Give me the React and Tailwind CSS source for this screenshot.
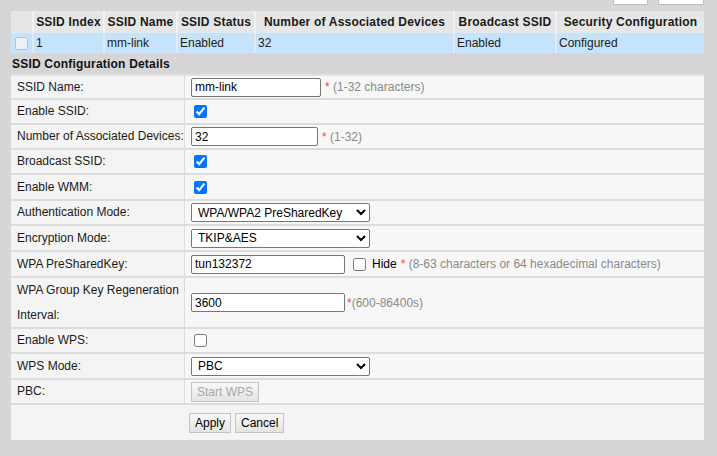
import React from "react";

const font = "font-['Liberation_Sans',Arial,sans-serif]";

const headers = [
    "",
    "SSID Index",
    "SSID Name",
    "SSID Status",
    "Number of Associated Devices",
    "Broadcast SSID",
    "Security Configuration",
];
const rowData = ["", "1", "mm-link", "Enabled", "32", "Enabled", "Configured"];

const Hint = ({ children }) => (
    <span className="ml-[4px] text-[#8a8a8a] whitespace-nowrap">
        <span className="text-[#ff4444]">*</span> {children}
    </span>
);

const Row = ({ label, h, children }) => (
    <div className={`flex ${h} border-b-2 border-[#dcdcdc]`}>
        <div className="w-[174px] shrink-0 flex items-center pl-[6px] border-r border-[#dcdcdc] bg-[#f4f4f4] leading-[25px]">
            {label}
        </div>
        <div className="flex-1 flex items-center pl-[6px] bg-[#f7f7f7]">{children}</div>
    </div>
);

const Check = ({ on }) => (
    <input type="checkbox" defaultChecked={on} className="m-0 ml-[3px] w-[13px] h-[13px]" />
);

const TextBox = ({ value, w }) => (
    <input
        type="text"
        defaultValue={value}
        className={`${w} h-[19px] border border-[#767676] rounded-[2px] bg-white px-[3px] text-[12px] text-black`}
    />
);

const Select = ({ value }) => (
    <select
        defaultValue={value}
        className="w-[179px] h-[19px] border border-[#767676] rounded-[2px] bg-white pl-[2px] text-[12px] text-black"
    >
        <option>{value}</option>
    </select>
);

const Btn = ({ children, disabled }) => (
    <button
        disabled={disabled}
        className={`h-[20px] px-[5px] border border-[#c4c4c4] bg-gradient-to-b from-[#f8f8f8] to-[#e4e4e4] text-[12px] ${
            disabled ? "text-[#a8a8a8]" : "text-black"
        }`}
    >
        {children}
    </button>
);

export default function App() {
    return (
        <div className={`${font} text-[12px] text-[#1a1a1a] bg-[#d6d6d6] w-[717px] h-[456px] overflow-hidden`}>
            {/* buttons cut off at the top */}
            <div className="flex h-[5px] mb-[6px]">
                <div className="ml-[613px] w-[35px] bg-white border border-t-0 border-[#bdbdbd]" />
                <div className="ml-[10px] w-[46px] bg-white border border-t-0 border-[#bdbdbd]" />
            </div>

            <div className="ml-[11px] w-[693px]">
                <div className="grid grid-cols-[23px_71px_73px_78px_199px_102px_147px] h-[21px] bg-[#e6e6e6] font-bold">
                    {headers.map((t, i) => (
                        <div
                            key={i}
                            className={`flex items-center justify-center whitespace-nowrap tracking-[0.2px] ${
                                i < headers.length - 1 ? "border-r-2 border-[#f2f2f2]" : ""
                            }`}
                        >
                            {t}
                        </div>
                    ))}
                </div>
                <div className="grid grid-cols-[23px_71px_73px_78px_199px_102px_147px] h-[21px] bg-[#c6e3fb] border-t border-[#e0eaf2]">
                    {rowData.map((t, i) => (
                        <div
                            key={i}
                            className={`flex items-center pl-[2px] whitespace-nowrap text-[#222] ${
                                i < rowData.length - 1 ? "border-r-2 border-[#e2ebf2]" : ""
                            }`}
                        >
                            {i === 0 ? (
                                <span className="ml-[2px] w-[13px] h-[13px] rounded-[2px] border border-[#b9c3cc] bg-[#edf1f4]" />
                            ) : (
                                t
                            )}
                        </div>
                    ))}
                </div>

                <div className="h-[21px] flex items-center pl-[1px] font-bold text-[#111] tracking-[0.2px]">
                    SSID Configuration Details
                </div>

                <div className="border-t-2 border-[#e2e2e2]">
                    <Row label="SSID Name:" h="h-[24px]">
                        <TextBox value="mm-link" w="w-[130px]" />
                        <Hint>(1-32 characters)</Hint>
                    </Row>
                    <Row label="Enable SSID:" h="h-[25px]">
                        <Check on />
                    </Row>
                    <Row label="Number of Associated Devices:" h="h-[25px]">
                        <TextBox value="32" w="w-[127px]" />
                        <Hint>(1-32)</Hint>
                    </Row>
                    <Row label="Broadcast SSID:" h="h-[25px]">
                        <Check on />
                    </Row>
                    <Row label="Enable WMM:" h="h-[26px]">
                        <Check on />
                    </Row>
                    <Row label="Authentication Mode:" h="h-[25px]">
                        <Select value="WPA/WPA2 PreSharedKey" />
                    </Row>
                    <Row label="Encryption Mode:" h="h-[26px]">
                        <Select value="TKIP&AES" />
                    </Row>
                    <Row label="WPA PreSharedKey:" h="h-[26px]">
                        <TextBox value="tun132372" w="w-[154px]" />
                        <input type="checkbox" className="m-0 ml-[8px] w-[13px] h-[13px]" />
                        <span className="ml-[6px] text-black">Hide</span>
                        <Hint>(8-63 characters or 64 hexadecimal characters)</Hint>
                    </Row>
                    <Row
                        label={
                            <span>
                                WPA Group Key Regeneration
                                <br />
                                Interval:
                            </span>
                        }
                        h="h-[51px]"
                    >
                        <TextBox value="3600" w="w-[154px]" />
                        <span className="ml-[2px] text-[#8a8a8a]">
                            <span className="text-[#ff4444]">*</span>(600-86400s)
                        </span>
                    </Row>
                    <Row label="Enable WPS:" h="h-[25px]">
                        <Check />
                    </Row>
                    <Row label="WPS Mode:" h="h-[26px]">
                        <Select value="PBC" />
                    </Row>
                    <Row label="PBC:" h="h-[25px]">
                        <Btn disabled>Start WPS</Btn>
                    </Row>
                    <div className="h-[35px] flex items-center gap-[4px] pl-[178px] bg-[#f4f4f4]">
                        <Btn>Apply</Btn>
                        <Btn>Cancel</Btn>
                    </div>
                </div>
            </div>
        </div>
    );
}
